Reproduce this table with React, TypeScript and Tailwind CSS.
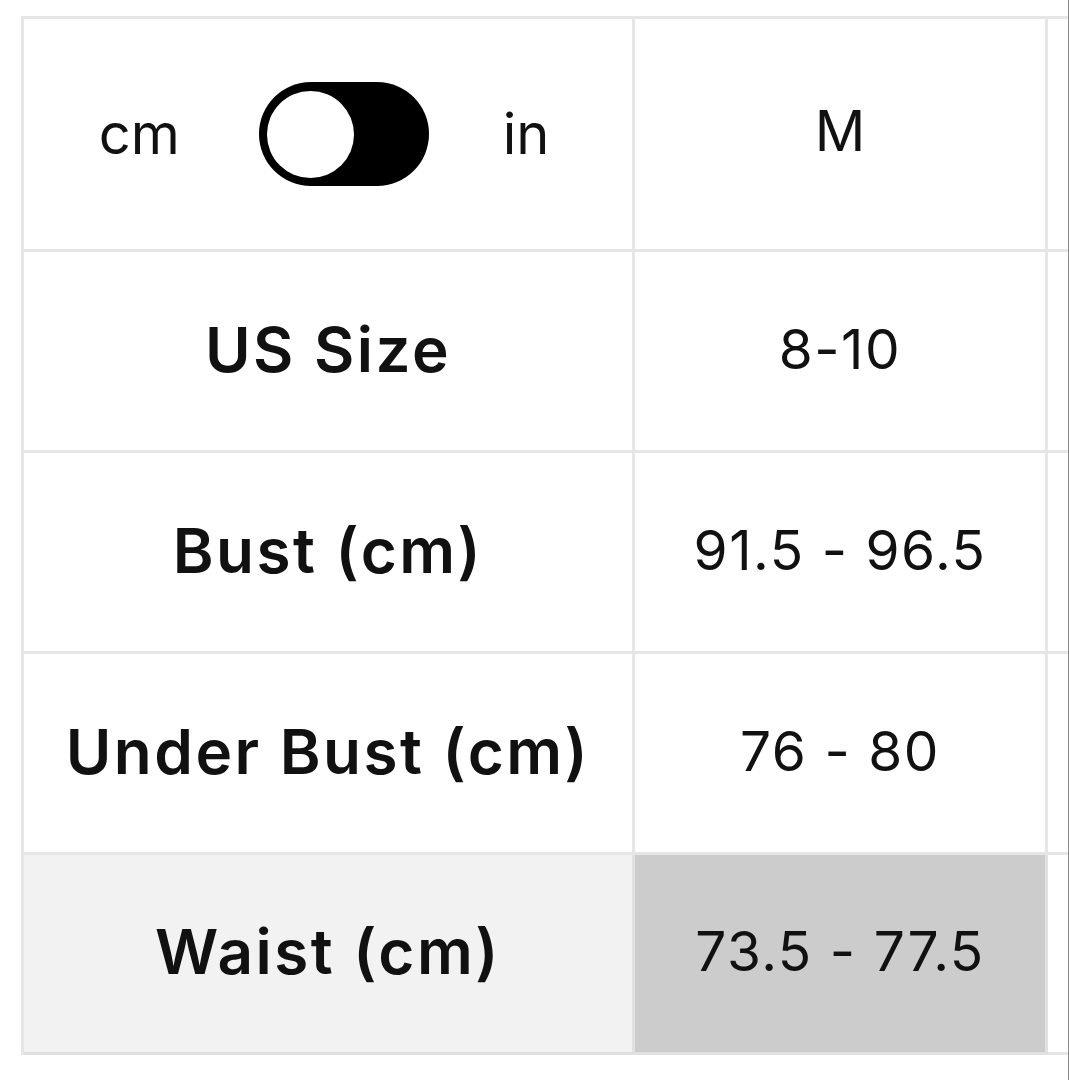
const rows = [
  { label: "US Size", value: "8-10" },
  { label: "Bust (cm)", value: "91.5 - 96.5" },
  { label: "Under Bust (cm)", value: "76 - 80" },
];

function UnitToggle() {
  return (
    <div className="flex items-center justify-center text-[56px] text-[#111]">
      <span>cm</span>
      <span className="ml-[79px] mr-[74px] flex h-[104px] w-[170px] items-center rounded-full bg-black px-[8px]">
        <span className="h-[87px] w-[87px] rounded-full bg-white" />
      </span>
      <span>in</span>
    </div>
  );
}

export default function App() {
  return (
    <div
      className="h-[1080px] w-full overflow-hidden border-r border-[#8a8a8a] bg-white pl-[21px] pt-[16px] text-[#111]"
      style={{ fontFamily: "Inter, Lato, sans-serif" }}
    >
      <div className="w-[1200px] border-l-[3px] border-t-[3px] border-[#e6e6e6]">
        {/* header */}
        <div className="flex h-[233px]">
          <div className="flex w-[611px] items-center justify-center border-b-[3px] border-r-[3px] border-[#e6e6e6] pr-[8px]">
            <UnitToggle />
          </div>
          <div className="flex w-[413px] items-center justify-center border-b-[3px] border-r-[3px] border-[#e6e6e6] pb-[6px] text-[56px]">
            M
          </div>
          <div className="flex-1 border-b-[3px] border-[#e6e6e6]" />
        </div>

        {rows.map((r) => (
          <div key={r.label} className="flex h-[201px]">
            <div className="flex w-[611px] items-center justify-center border-b-[3px] border-r-[3px] border-[#e6e6e6] pb-[4px] text-[62px] font-semibold tracking-[0.04em]">
              {r.label}
            </div>
            <div className="flex w-[413px] items-center justify-center border-b-[3px] border-r-[3px] border-[#e6e6e6] pb-[4px] text-[55px] tracking-[0.028em]">
              {r.value}
            </div>
            <div className="flex-1 border-b-[3px] border-[#e6e6e6]" />
          </div>
        ))}

        {/* highlighted row */}
        <div className="flex h-[200px]">
          <div className="flex w-[611px] items-center justify-center border-b-[3px] border-r-[3px] border-[#e0e0e0] bg-[#f2f2f2] pb-[4px] text-[62px] font-semibold tracking-[0.04em]">
            Waist (cm)
          </div>
          <div className="flex w-[413px] items-center justify-center border-b-[3px] border-r-[3px] border-[#e0e0e0] bg-[#cccccc] pb-[4px] text-[55px] tracking-[0.028em]">
            73.5 - 77.5
          </div>
          <div className="flex-1 border-b-[3px] border-[#e6e6e6]" />
        </div>
      </div>
    </div>
  );
}
